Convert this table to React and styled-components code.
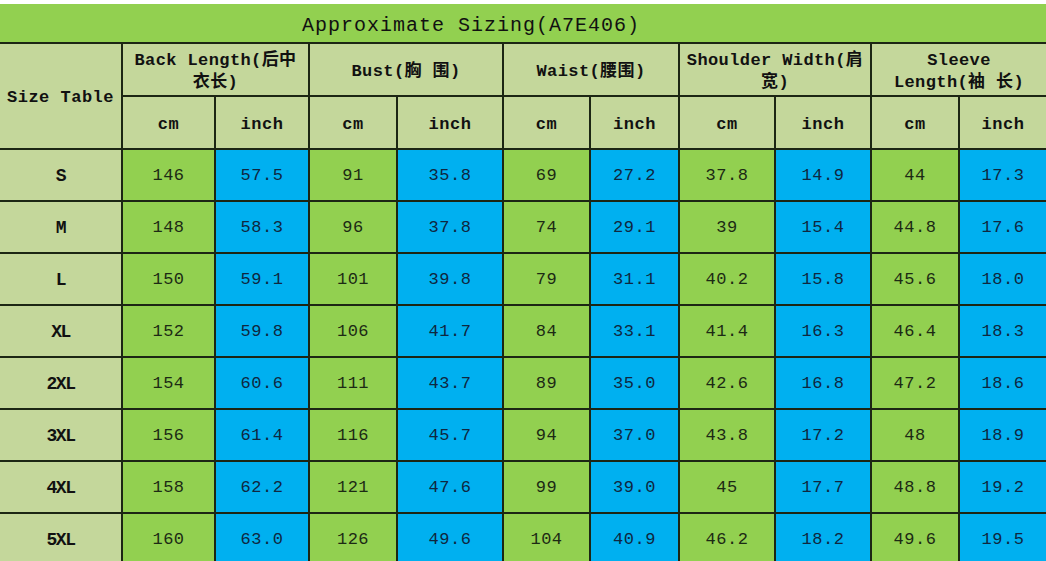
import styled, { createGlobalStyle } from 'styled-components';

const GlobalStyle = createGlobalStyle`
    html, body {
        margin: 0;
        padding: 0;
        background: #ffffff;
    }
`;

const LINE = '#1c2614';
const FONT = '"Liberation Mono", "Noto Sans CJK SC", monospace';

const Page = styled.div`
    width: 1046px;
    height: 561px;
    overflow: hidden;
    padding-top: 4px;
    box-sizing: border-box;
    background: #ffffff;
`;

const Table = styled.table`
    width: 1046px;
    table-layout: fixed;
    border-collapse: collapse;
    font-family: ${FONT};
    color: #111111;
`;

const TitleRow = styled.tr`
    height: 39px;
`;

const TitleCell = styled.td`
    background: #92d050;
    border-bottom: 2px solid ${LINE};
    text-align: center;
    padding: 5px 104px 0 0;
    font-size: 20px;
    letter-spacing: 1px;
    color: #111111;
`;

const HeadRow = styled.tr`
    height: 53px;
`;

const HeadCell = styled.td`
    background: #c4d79b;
    border: 2px solid ${LINE};
    border-top: none;
    text-align: center;
    vertical-align: middle;
    padding: ${(p) => (p.$group ? '4px 0 0' : '4px 0 0')};
    font-size: 17px;
    font-weight: bold;
    line-height: 22px;
    letter-spacing: ${(p) => (p.$group ? '0.4px' : '0.5px')};
    white-space: nowrap;

    &:first-child {
        border-left: none;
    }

    &:last-child {
        border-right: none;
    }
`;

const DataRow = styled.tr`
    height: 52px;
`;

const SizeCell = styled.td`
    background: #c4d79b;
    border: 2px solid ${LINE};
    border-left: none;
    text-align: center;
    font-size: 18px;
    font-weight: bold;
    letter-spacing: -1.5px;
    padding-top: 2px;
`;

const ValueCell = styled.td`
    background: ${(p) => (p.$tone === 'blue' ? '#00b0f0' : '#92d050')};
    color: ${(p) => (p.$tone === 'blue' ? '#0f2740' : '#1c2a14')};
    border: 2px solid ${LINE};
    text-align: center;
    font-size: 17px;
    letter-spacing: 0.5px;
    padding-top: 2px;

    &:last-child {
        border-right: none;
    }
`;

const widths = [122, 93, 94, 88, 106, 87, 89, 96, 96, 88, 87];

const groups = [
    ['Back Length(后中', '衣长)'],
    ['Bust(胸 围)'],
    ['Waist(腰围)'],
    ['Shoulder Width(肩', '宽)'],
    ['Sleeve', 'Length(袖 长)'],
];

const rows = [
    ['S', '146', '57.5', '91', '35.8', '69', '27.2', '37.8', '14.9', '44', '17.3'],
    ['M', '148', '58.3', '96', '37.8', '74', '29.1', '39', '15.4', '44.8', '17.6'],
    ['L', '150', '59.1', '101', '39.8', '79', '31.1', '40.2', '15.8', '45.6', '18.0'],
    ['XL', '152', '59.8', '106', '41.7', '84', '33.1', '41.4', '16.3', '46.4', '18.3'],
    ['2XL', '154', '60.6', '111', '43.7', '89', '35.0', '42.6', '16.8', '47.2', '18.6'],
    ['3XL', '156', '61.4', '116', '45.7', '94', '37.0', '43.8', '17.2', '48', '18.9'],
    ['4XL', '158', '62.2', '121', '47.6', '99', '39.0', '45', '17.7', '48.8', '19.2'],
    ['5XL', '160', '63.0', '126', '49.6', '104', '40.9', '46.2', '18.2', '49.6', '19.5'],
];

const App = () => {
    return (
        <Page>
            <GlobalStyle />
            <Table>
                <colgroup>
                    {widths.map((w, i) => (
                        <col key={i} style={{ width: w }} />
                    ))}
                </colgroup>
                <tbody>
                    <TitleRow>
                        <TitleCell colSpan={11}>Approximate Sizing(A7E406)</TitleCell>
                    </TitleRow>
                    <HeadRow>
                        <HeadCell rowSpan={2}>Size Table</HeadCell>
                        {groups.map((lines, i) => (
                            <HeadCell key={i} colSpan={2} $group>
                                {lines.map((l, j) => (
                                    <div key={j}>{l}</div>
                                ))}
                            </HeadCell>
                        ))}
                    </HeadRow>
                    <HeadRow>
                        {groups.map((_, i) => [
                            <HeadCell key={`c${i}`}>cm</HeadCell>,
                            <HeadCell key={`i${i}`}>inch</HeadCell>,
                        ])}
                    </HeadRow>
                    {rows.map(([size, ...values]) => (
                        <DataRow key={size}>
                            <SizeCell>{size}</SizeCell>
                            {values.map((v, i) => (
                                <ValueCell key={i} $tone={i % 2 ? 'blue' : 'green'}>
                                    {v}
                                </ValueCell>
                            ))}
                        </DataRow>
                    ))}
                </tbody>
            </Table>
        </Page>
    );
};

export default App;
